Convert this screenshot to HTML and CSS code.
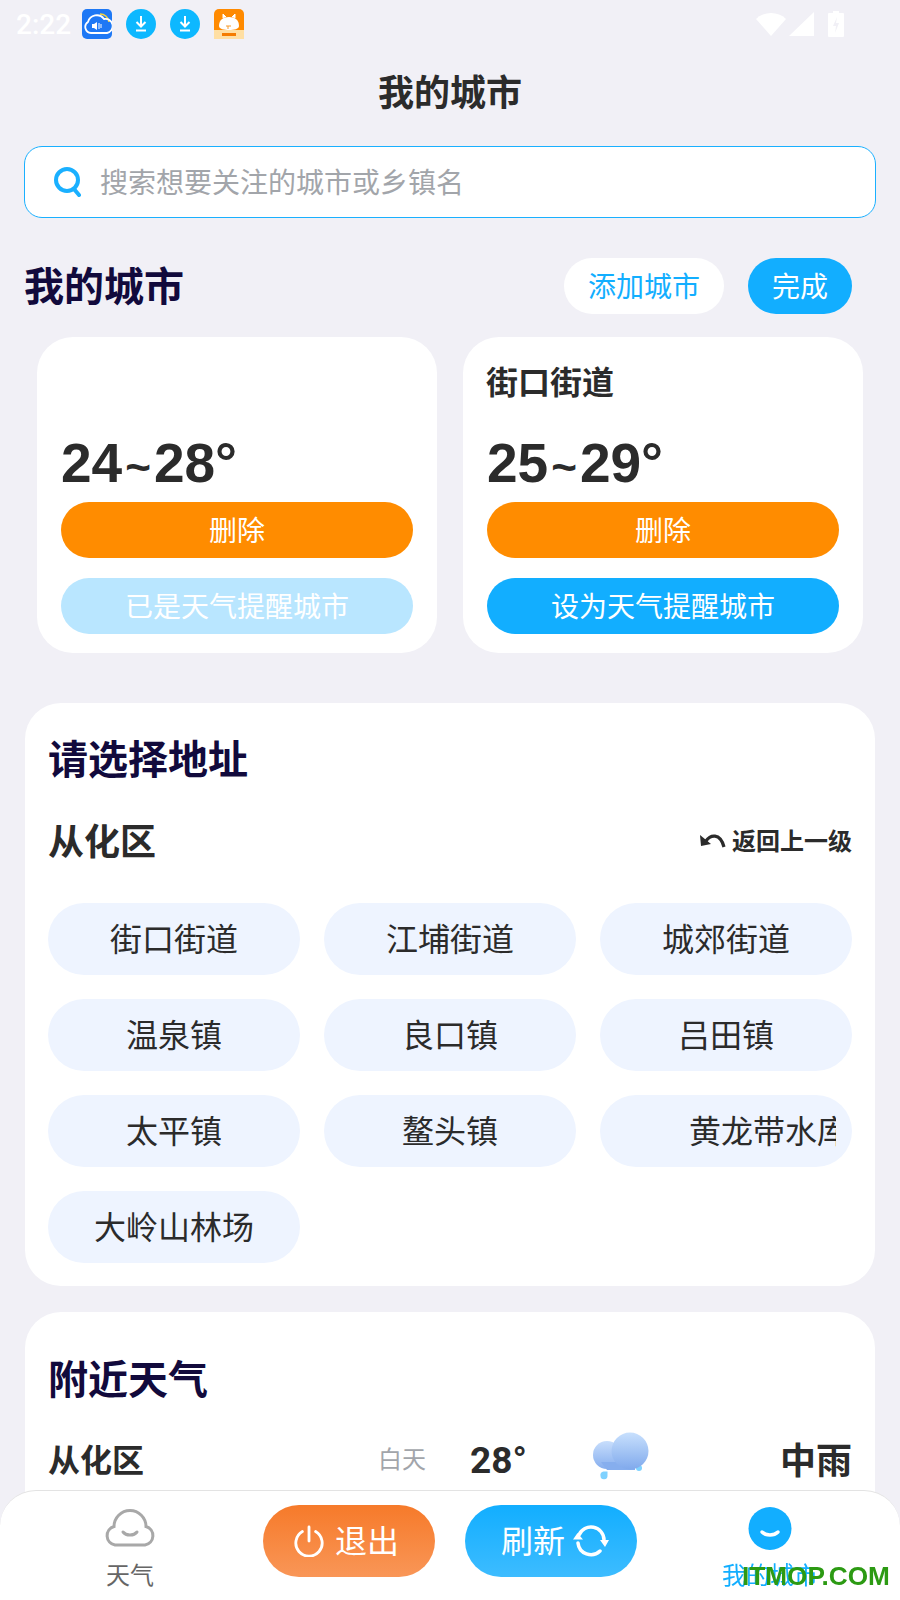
FILE: index.html
```html
<!doctype html>
<html lang="zh">
<head>
    <meta charset="UTF-8" />
    <title>我的城市</title>
    <link rel="stylesheet" href="styles.css">
</head>
<body>
    <div class="status">
        <span class="time">2:22</span>
        <svg class="app" viewBox="0 0 30 30">
            <rect width="30" height="30" rx="5" fill="#1e78f5"/>
            <path d="M18 5a9 9 0 0 1 9 8" fill="none" stroke="#f5d33c" stroke-width="1.500"/>
            <path d="M9 24a6 6 0 0 1-3-11 9 9 0 0 1 16-3 7 7 0 0 1 3 14z" fill="none" stroke="#fff" stroke-width="1.800"/>
            <path d="M10 15h2l3-2v8l-3-2h-2z" fill="#fff"/>
            <path d="M17 14v6M19 15v4" stroke="#fff" stroke-width="1"/>
        </svg>
        <svg class="app" viewBox="0 0 30 30">
            <circle cx="15" cy="15" r="15" fill="#0db8ff"/>
            <path d="M15 7v10M10.500 13l4.500 4.500 4.500-4.500M10 21.500h10" fill="none" stroke="#fff" stroke-width="2"/>
        </svg>
        <svg class="app" viewBox="0 0 30 30">
            <circle cx="15" cy="15" r="15" fill="#0db8ff"/>
            <path d="M15 7v10M10.500 13l4.500 4.500 4.500-4.500M10 21.500h10" fill="none" stroke="#fff" stroke-width="2"/>
        </svg>
        <svg class="app" viewBox="0 0 30 30">
            <rect width="30" height="30" rx="5" fill="#ff8a00"/>
            <rect y="21" width="30" height="9" fill="#ffdfa3"/>
            <path d="M5 17c0-6 4-9 10-9s10 3 10 9c0 3-5 4-10 4S5 20 5 17z" fill="#fff"/>
            <path d="M9 9l0-4 3 3M21 9l0-4-3 3" fill="#fff" stroke="#fff" stroke-width="1"/>
            <path d="M12 17h5M14 17v3" stroke="#f79a2b" stroke-width="1"/>
            <rect x="8" y="24" width="14" height="3" fill="#f57c00"/>
        </svg>
        <span class="status-gap"></span>
        <svg class="wifi" viewBox="0 0 30 24"><path d="M0 7a22 22 0 0 1 30 0L15 24z" fill="#fff"/></svg>
        <svg class="signal" viewBox="0 0 25 24"><path d="M25 0v24H0z" fill="#fff"/></svg>
        <svg class="battery" viewBox="0 0 16 26">
            <path d="M5 0h6v2h4a1 1 0 0 1 1 1v22a1 1 0 0 1-1 1H1a1 1 0 0 1-1-1V3a1 1 0 0 1 1-1h4z" fill="#fff"/>
            <path d="M9 6l-4 9h3l-1 7 4-10H8z" fill="#f1f0f6"/>
        </svg>
    </div>

    <div class="page-title">我的城市</div>

    <div class="search">
        <svg class="search-icon" viewBox="0 0 28 32">
            <circle cx="14" cy="14" r="11" fill="none" stroke="#1ab0ff" stroke-width="4"/>
            <path d="M21 23l5 6" stroke="#1ab0ff" stroke-width="4" stroke-linecap="round"/>
        </svg>
        <span>搜索想要关注的城市或乡镇名</span>
    </div>

    <div class="my-head">
        <div class="head-title">我的城市</div>
        <div class="pill pill-white">添加城市</div>
        <div class="pill pill-blue">完成</div>
    </div>

    <div class="city-row">
        <div class="city-card">
            <div class="city-name"></div>
            <div class="city-temp">24<span class="tilde">~</span>28°</div>
            <div class="card-btn btn-orange">删除</div>
            <div class="card-btn btn-pale">已是天气提醒城市</div>
        </div>
        <div class="city-card">
            <div class="city-name">街口街道</div>
            <div class="city-temp">25<span class="tilde">~</span>29°</div>
            <div class="card-btn btn-orange">删除</div>
            <div class="card-btn btn-blue">设为天气提醒城市</div>
        </div>
    </div>

    <div class="panel address">
        <div class="head-title">请选择地址</div>
        <div class="sub-head">
            <div class="sub-title">从化区</div>
            <div class="back">
                <svg class="back-icon" viewBox="0 0 26 16">
                    <path d="M6 9C10 3 20 0 24 15" fill="none" stroke="#2b2b2b" stroke-width="3.200"/>
                    <path d="M0 3l1 11 10-2z" fill="#2b2b2b"/>
                </svg>
                返回上一级
            </div>
        </div>
        <div class="chips">
            <div class="chip">街口街道</div>
            <div class="chip">江埔街道</div>
            <div class="chip">城郊街道</div>
            <div class="chip">温泉镇</div>
            <div class="chip">良口镇</div>
            <div class="chip">吕田镇</div>
            <div class="chip">太平镇</div>
            <div class="chip">鳌头镇</div>
            <div class="chip chip-long"><span class="chip-clip">黄龙带水库</span></div>
            <div class="chip">大岭山林场</div>
        </div>
    </div>

    <div class="panel nearby">
        <div class="head-title">附近天气</div>
        <div class="near-row">
            <div class="near-name">从化区</div>
            <div class="near-time">白天</div>
            <div class="near-temp">28°</div>
            <svg class="near-icon" viewBox="0 0 64 56">
                <defs>
                    <linearGradient id="cloudBack" x1="0" y1="0" x2="0" y2="1">
                        <stop offset="0" stop-color="#c8defc"/>
                        <stop offset="1" stop-color="#86aeee"/>
                    </linearGradient>
                    <linearGradient id="cloudFront" x1="0" y1="0" x2="0" y2="1">
                        <stop offset="0" stop-color="#c8e0fd"/>
                        <stop offset="1" stop-color="#80a9ec"/>
                    </linearGradient>
                </defs>
                <path d="M10.500 50a3.500 3.500 0 0 1 3-4.500h4v4a3.500 3.500 0 0 1-7 .5z" fill="#7fd2ff"/>
                <circle cx="49" cy="42" r="3" fill="#7fd2ff"/>
                <circle cx="17" cy="29" r="14" fill="url(#cloudBack)"/>
                <path d="M11 36h34v8H17z" fill="#86aeee"/>
                <circle cx="40" cy="25" r="18.500" fill="url(#cloudFront)"/>
            </svg>
            <div class="near-cond">中雨</div>
        </div>
    </div>

    <div class="tabbar">
        <div class="tab">
            <svg class="tab-icon" viewBox="0 0 52 44">
                <path d="M11 38a9.500 9.500 0 0 1-1-18.500 16 16 0 0 1 32 0A9.500 9.500 0 0 1 41 38z" fill="none" stroke="#a8a8a8" stroke-width="3"/>
                <path d="M19 25c3 4 11 4 14 0" fill="none" stroke="#a8a8a8" stroke-width="3" stroke-linecap="round"/>
            </svg>
            <div class="tab-label">天气</div>
        </div>
        <div class="big-btn big-orange">
            <svg class="big-icon" viewBox="0 0 32 34">
                <path d="M9 7a14 14 0 1 0 14 0" fill="none" stroke="#fff" stroke-width="3" stroke-linecap="round"/>
                <path d="M16 2v15" stroke="#fff" stroke-width="3" stroke-linecap="round"/>
            </svg>
            退出
        </div>
        <div class="big-btn big-blue">
            刷新
            <svg class="big-icon" viewBox="0 0 36 32">
                <path d="M6 10A13 13 0 0 1 31 15M5 18A13 13 0 0 0 27 26" fill="none" stroke="#fff" stroke-width="3.500" stroke-linecap="round"/>
                <path d="M0 14.500h10L4.500 8zM27 15h9l-4 7z" fill="#fff"/>
            </svg>
        </div>
        <div class="tab tab-on">
            <svg class="tab-icon" viewBox="0 0 52 44">
                <circle cx="26" cy="21.500" r="21.500" fill="#12aeff"/>
                <path d="M18 25c4 4 12 4 16 0" fill="none" stroke="#fff" stroke-width="3.500" stroke-linecap="round"/>
            </svg>
            <div class="tab-label">我的城市</div>
        </div>
        <div class="watermark">ITMOP.COM</div>
    </div>
</body>
</html>
```

FILE: styles.css
```css
html, body {
    margin: 0;
    height: 1600px;
    overflow: hidden;
}

body {
    background-color: #f1f0f6;
    color: #2b2b2b;
    font-family: Roboto, "Noto Sans CJK SC", sans-serif;
}

.status {
    height: 48px;
    display: flex;
    align-items: center;
    padding-left: 16px;
    padding-right: 56px;
}

.time {
    width: 66px;
    color: #fff;
    font-size: 28px;
    font-weight: 500;
}

.app {
    width: 30px;
    height: 30px;
    margin-right: 14px;
}

.status-gap {
    flex: 1;
}

.wifi {
    width: 30px;
    height: 24px;
}

.signal {
    width: 25px;
    height: 24px;
    margin-left: 3px;
}

.battery {
    width: 16px;
    height: 26px;
    margin-left: 14px;
}

.page-title {
    height: 88px;
    line-height: 92px;
    text-align: center;
    font-size: 36px;
    font-weight: 700;
}

.search {
    margin: 10px 24px 0;
    height: 72px;
    box-sizing: border-box;
    border: 1.5px solid #1ab0ff;
    border-radius: 18px;
    background-color: #fff;
    display: flex;
    align-items: center;
    padding-left: 28px;
    padding-bottom: 2px;
    color: #a2a5aa;
    font-size: 28px;
}

.search-icon {
    width: 28px;
    height: 32px;
    margin-right: 19px;
    margin-top: 2px;
}

.my-head {
    margin-top: 40px;
    height: 56px;
    display: flex;
    align-items: center;
    padding-left: 24px;
    padding-right: 48px;
}

.head-title {
    font-size: 40px;
    line-height: 44px;
    font-weight: 700;
    color: #120a3c;
}

.my-head .head-title {
    flex: 1;
    padding-top: 4px;
}

.pill {
    height: 56px;
    line-height: 60px;
    border-radius: 28px;
    text-align: center;
    font-size: 28px;
}

.pill-white {
    width: 160px;
    background-color: #fff;
    color: #12aeff;
}

.pill-blue {
    width: 104px;
    margin-left: 24px;
    background-color: #12aeff;
    color: #fff;
}

.city-row {
    margin-top: 23px;
    padding: 0 37px;
    display: flex;
    gap: 26px;
}

.city-card {
    width: 400px;
    height: 316px;
    box-sizing: border-box;
    padding: 24px 24px 0;
    background-color: #fff;
    border-radius: 36px;
}

.city-name {
    height: 44px;
    line-height: 44px;
    margin-left: -1px;
    font-size: 32px;
    font-weight: 700;
}

.city-temp {
    margin-top: 25px;
    margin-bottom: 8px;
    height: 64px;
    line-height: 66px;
    font-family: "Liberation Sans", sans-serif;
    font-size: 55px;
    font-weight: 700;
}

.tilde {
    margin: 0 3px;
    font-size: 44px;
}

.card-btn {
    height: 56px;
    line-height: 60px;
    border-radius: 28px;
    text-align: center;
    font-size: 28px;
    color: #fff;
    margin-bottom: 20px;
}

.btn-orange {
    background-color: #ff8c00;
}

.btn-pale {
    background-color: #b9e6ff;
}

.btn-blue {
    background-color: #12aeff;
}

.panel {
    margin-left: 25px;
    margin-right: 25px;
    background-color: #fff;
    border-radius: 36px;
    padding-left: 23px;
    padding-right: 23px;
}

.address {
    margin-top: 50px;
    height: 583px;
    box-sizing: border-box;
    padding-top: 36px;
}

.sub-head {
    margin-top: 31px;
    height: 50px;
    display: flex;
    justify-content: space-between;
    align-items: center;
}

.sub-title {
    font-size: 36px;
    font-weight: 700;
}

.back {
    display: flex;
    align-items: center;
    font-size: 24px;
    font-weight: 700;
}

.back-icon {
    width: 26px;
    height: 16px;
    margin-right: 6px;
    margin-top: 2px;
}

.chips {
    margin-top: 39px;
    display: grid;
    grid-template-columns: repeat(3, 252px);
    gap: 24px;
}

.chip {
    height: 72px;
    line-height: 74px;
    border-radius: 36px;
    background-color: #eef4ff;
    text-align: center;
    font-size: 32px;
}

.chip-long {
    padding: 0 16px;
    text-align: left;
}

.chip-clip {
    display: block;
    width: 220px;
    overflow: hidden;
    white-space: nowrap;
    padding-left: 73px;
    box-sizing: border-box;
}

.nearby {
    margin-top: 26px;
    height: 288px;
    box-sizing: border-box;
    padding-top: 47px;
}

.near-row {
    margin-top: 35px;
    display: grid;
    grid-template-columns: 330px 92px 120px 1fr auto;
    grid-template-rows: 44px;
    align-items: center;
}

.near-name {
    font-size: 32px;
    font-weight: 700;
    margin-bottom: 4px;
}

.near-time {
    font-size: 24px;
    color: #a2a5aa;
    margin-bottom: 6px;
}

.near-temp {
    font-size: 37px;
    font-weight: 700;
}

.near-icon {
    width: 64px;
    height: 56px;
    align-self: start;
    margin-top: -12px;
}

.near-cond {
    font-size: 36px;
    font-weight: 700;
    margin-bottom: 4px;
}

.tabbar {
    position: fixed;
    left: 0;
    right: 0;
    bottom: 0;
    height: 110px;
    box-sizing: border-box;
    background-color: #fff;
    border-top: 1px solid #e3e3e3;
    border-radius: 36px 36px 0 0;
    display: grid;
    grid-template-columns: 263px 172px 30px 172px 1fr;
    grid-template-areas: "a b . c d";
}

.tab {
    grid-area: a;
    text-align: center;
    padding-top: 16px;
    padding-right: 3px;
}

.tab-on {
    grid-area: d;
    padding-right: 0;
    padding-left: 3px;
}

.tab-icon {
    display: block;
    width: 52px;
    height: 44px;
    margin: 0 auto;
}

.tab-label {
    font-size: 24px;
    line-height: 36px;
    margin-top: 7px;
    color: #666;
}

.tab-on .tab-label {
    color: #12aeff;
}

.big-btn {
    margin-top: 14px;
    height: 72px;
    box-sizing: border-box;
    padding-bottom: 4px;
    border-radius: 36px;
    color: #fff;
    font-size: 32px;
    display: flex;
    align-items: center;
    justify-content: center;
    gap: 10px;
}

.big-orange {
    grid-area: b;
    padding-right: 6px;
    background-image: linear-gradient(#f67a2a, #f99657);
}

.big-blue {
    grid-area: c;
    padding-left: 8px;
    gap: 8px;
    background-image: linear-gradient(#12aeff, #3dbcff);
}

.big-icon {
    width: 32px;
    height: 32px;
    margin-top: 4px;
}

.big-blue .big-icon {
    width: 36px;
}

.watermark {
    position: absolute;
    left: 742px;
    bottom: 9px;
    color: #2c9a13;
    font-family: "Liberation Sans", sans-serif;
    font-size: 26.200px;
    font-weight: 700;
    line-height: 30px;
}
```
